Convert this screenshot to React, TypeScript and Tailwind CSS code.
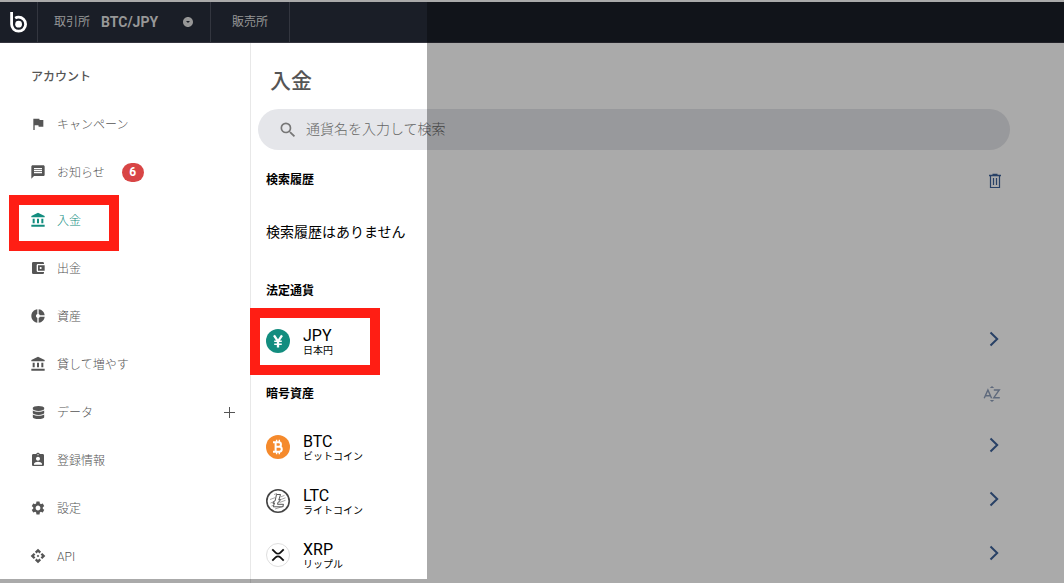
import { type ReactNode } from "react";
import {
  MdFlag,
  MdMessage,
  MdAccountBalance,
  MdAccountBalanceWallet,
  MdDonutSmall,
  MdAssignmentInd,
  MdSettings,
  MdApi,
  MdSearch,
  MdArrowDropDownCircle,
} from "react-icons/md";
import { FaDatabase } from "react-icons/fa";

type NavItem = { label: string; icon: ReactNode; badge?: number; active?: boolean; expandable?: boolean };

const navItems: NavItem[] = [
  { label: "キャンペーン", icon: <MdFlag /> },
  { label: "お知らせ", icon: <MdMessage />, badge: 6 },
  { label: "入金", icon: <MdAccountBalance />, active: true },
  { label: "出金", icon: <MdAccountBalanceWallet /> },
  { label: "資産", icon: <MdDonutSmall /> },
  { label: "貸して増やす", icon: <MdAccountBalance /> },
  { label: "データ", icon: <FaDatabase className="size-[13px]" />, expandable: true },
  { label: "登録情報", icon: <MdAssignmentInd /> },
  { label: "設定", icon: <MdSettings /> },
  { label: "API", icon: <MdApi /> },
];

function Logo() {
  return (
    <svg viewBox="0 0 20 22" className="h-[22px] w-5" fill="none" aria-hidden="true">
      <path d="M2.6 1v12.2a7 7 0 1 0 7-7c-1.300 0-2.400.3-3.400.9" stroke="#fff" strokeWidth="2.8" />
      <circle cx="9.600" cy="13.200" r="3.400" fill="#fff" />
    </svg>
  );
}

function YenIcon() {
  return (
    <svg viewBox="0 0 24 24" className="size-6" aria-hidden="true">
      <circle cx="12" cy="12" r="12" fill="#138d7f" />
      <path d="M8 6.400l4 6 4-6M12 12v6.500" fill="none" stroke="#fff" strokeWidth="2.300" />
      <path d="M8.200 12.300h7.600M8.200 15.200h7.600" fill="none" stroke="#fff" strokeWidth="1.500" />
    </svg>
  );
}

function BtcIcon() {
  return (
    <svg viewBox="0 0 24 24" className="size-6" fill="none" aria-hidden="true">
      <circle cx="12" cy="12" r="12" fill="#f58a2c" />
      <path d="M7 7.300h5.700a2.200 2.200 0 0 1 0 4.500H9.800M12.700 11.800h.6a2.450 2.450 0 0 1 0 4.900H7M9.600 7.300v9.400" stroke="#fff" strokeWidth="2" />
      <path d="M10.600 4.800v2.500M13.300 4.800v2.500M10.600 16.700v2.500M13.300 16.700v2.500" stroke="#fff" strokeWidth="1.400" />
    </svg>
  );
}

function LtcIcon() {
  return (
    <svg viewBox="0 0 24 24" className="size-6" fill="none" aria-hidden="true">
      <circle cx="12" cy="12" r="11.200" fill="#fff" stroke="#444" strokeWidth="1.600" />
      <path d="M4 10.500l5-1.800M4.500 14l4-1.500M5.500 17l3-1.200M8 5.500l3-1M14.500 8l4-1.600M14 10.800l5.500-2M13.500 13.500l6-2.200M9 20l9-3" stroke="#999" strokeWidth=".9" />
      <path d="M10.500 5.500h4l-1.700 5.500 1.500-.6-.7 2-1.400.6-.7 2.300h6l-.8 2.500H7.300l1.200-3.900-1.500.6.600-2 1.500-.6z" fill="#fff" stroke="#444" strokeWidth=".9" />
    </svg>
  );
}

function XrpIcon() {
  return (
    <svg viewBox="0 0 24 24" className="size-6" fill="none" aria-hidden="true">
      <circle cx="12" cy="12" r="11.500" fill="#fff" stroke="#d5d5d5" strokeWidth=".8" />
      <path d="M6.300 6.300l3.300 3.300a3.400 3.400 0 0 0 4.800 0l3.300-3.300M6.300 17.700l3.300-3.300a3.400 3.400 0 0 1 4.800 0l3.300 3.300" stroke="#111" strokeWidth="1.800" />
    </svg>
  );
}

function Chevron() {
  return (
    <svg viewBox="0 0 10 16" className="mb-[5px] h-4 w-2.5" fill="none" stroke="#3d6299" strokeWidth="2" aria-hidden="true">
      <path d="M1.500 1.500L8.200 8l-6.700 6.500" />
    </svg>
  );
}

function TrashIcon() {
  return (
    <svg viewBox="0 0 14 16" className="h-4 w-3.5" fill="none" stroke="#3d6299" aria-hidden="true">
      <path d="M1 2.500h12M4.500 1.500h5" strokeWidth="1.400" />
      <path d="M2.500 2.500v12h9v-12M5.500 5v7M8.500 5v7" strokeWidth="1.200" />
    </svg>
  );
}

function SortIcon() {
  return (
    <svg viewBox="0 0 18 18" className="size-[18px]" fill="none" stroke="#8f9fbb" aria-hidden="true">
      <path d="M1.200 13.300L4.900 4.900l3.700 8.400M2.600 10.700h4.600M10.800 5h5.500l-5.500 7.700h6" strokeWidth="1.400" />
      <path d="M6.800 3L9 1l2.200 2zM6.800 15L9 17l2.200-2z" fill="#8f9fbb" stroke="none" />
    </svg>
  );
}

function Frame({ className }: { className: string }) {
  return <span className={`pointer-events-none absolute border-[10px] border-[#ff1e14] ${className}`} />;
}

function CurrencyRow({ code, name, icon, highlighted }: { code: string; name: string; icon: ReactNode; highlighted?: boolean }) {
  return (
    <li className="relative">
      <a href={`#${code}`} className="flex h-[54px] items-center pr-[11px] pl-2">
        {icon}
        <span className="ml-[13px] flex flex-1 flex-col pt-[3px] text-black">
          <span className="text-base leading-[17px]">{code}</span>
          <span className="text-[10px] leading-[14px]">{name}</span>
        </span>
        <Chevron />
      </a>
      {highlighted && <Frame className="-top-[6px] -left-2 h-[67px] w-[130px]" />}
    </li>
  );
}

export default function App() {
  return (
    <div className="relative flex h-screen flex-col overflow-hidden bg-white font-[Roboto,'Noto_Sans_CJK_JP',sans-serif] text-[#555]">
      <header className="mt-0.5 flex h-[41px] shrink-0 border-b border-[#34343e] bg-[#1a1e27] text-xs text-[#979797]">
        <a href="#home" aria-label="ホーム" className="flex w-[38px] items-center justify-center border-r border-[#33363f]">
          <Logo />
        </a>
        <button type="button" className="flex w-[173px] items-center border-r border-[#33363f] pr-4 pl-4">
          <span>取引所</span>
          <span className="ml-[11px] text-sm font-bold">BTC/JPY</span>
          <MdArrowDropDownCircle className="ml-auto size-3" />
        </button>
        <button type="button" className="w-[79px] border-r border-[#33363f]">
          販売所
        </button>
      </header>

      <div className="flex min-h-0 flex-1">
        <nav className="w-[251px] shrink-0 border-r border-[#e8e8e8] pt-[9px]">
          <h2 className="flex h-12 items-center pt-0.5 pl-[31px] text-xs font-medium">アカウント</h2>
          <ul>
            {navItems.map((item) => (
              <li key={item.label} className="relative">
                <a
                  href={`#${item.label}`}
                  className={`flex h-12 items-center pr-[14px] pl-[30px] text-xs ${item.active ? "text-[#138d7f]" : "text-[#555]"}`}
                >
                  <span className="flex w-4 justify-center text-base">{item.icon}</span>
                  <span className="ml-[11px] pt-0.5 font-light">{item.label}</span>
                  {item.badge && (
                    <span className="ml-[17px] flex h-[19px] w-[22px] items-center justify-center rounded-full bg-[#d84545] text-xs font-bold text-white">
                      {item.badge}
                    </span>
                  )}
                  {item.expandable && (
                    <svg viewBox="0 0 13 13" className="ml-auto size-[13px]" stroke="#555" aria-hidden="true">
                      <path d="M6.500 1v11M1 6.500h11" />
                    </svg>
                  )}
                </a>
                {item.active && <Frame className="-top-px left-[9px] h-14 w-[110px]" />}
              </li>
            ))}
          </ul>
        </nav>

        <main className="flex-1 pr-[54px] pl-[7px]">
          <h1 className="pt-5 pl-3 text-[21px] leading-9 font-medium">入金</h1>
          <label className="mt-[10px] flex h-[41px] items-center rounded-full bg-[#e5e6ea] pl-5">
            <MdSearch className="size-5 text-[#777]" />
            <input
              type="text"
              aria-label="通貨名を入力して検索"
              placeholder="通貨名を入力して検索"
              className="ml-2 flex-1 bg-transparent pb-0.5 text-sm font-light outline-none placeholder:text-[#666]"
            />
          </label>

          <section className="text-black">
            <div className="mt-5 flex h-5 items-center justify-between pr-2 pl-2">
              <h2 className="text-xs font-bold">検索履歴</h2>
              <button type="button" aria-label="検索履歴を削除" className="pt-0.5">
                <TrashIcon />
              </button>
            </div>
            <p className="mt-8 pl-2 text-sm leading-5">検索履歴はありません</p>
          </section>

          <section className="text-black">
            <h2 className="mt-[39px] pl-2 text-xs leading-5 font-bold">法定通貨</h2>
            <ul className="mt-[13px]">
              <CurrencyRow code="JPY" name="日本円" icon={<YenIcon />} highlighted />
            </ul>
          </section>

          <section className="text-black">
            <div className="mt-4 flex h-5 items-center justify-between pr-[9px] pl-2">
              <h2 className="text-xs font-bold">暗号資産</h2>
              <button type="button" aria-label="並べ替え">
                <SortIcon />
              </button>
            </div>
            <ul className="mt-4">
              <CurrencyRow code="BTC" name="ビットコイン" icon={<BtcIcon />} />
              <CurrencyRow code="LTC" name="ライトコイン" icon={<LtcIcon />} />
              <CurrencyRow code="XRP" name="リップル" icon={<XrpIcon />} />
            </ul>
          </section>
        </main>
      </div>

      <div className="pointer-events-none absolute top-0.5 bottom-1 left-0 w-[427px] shadow-[0_0_0_9999px_rgb(0_0_0/0.335)]" />
    </div>
  );
}
